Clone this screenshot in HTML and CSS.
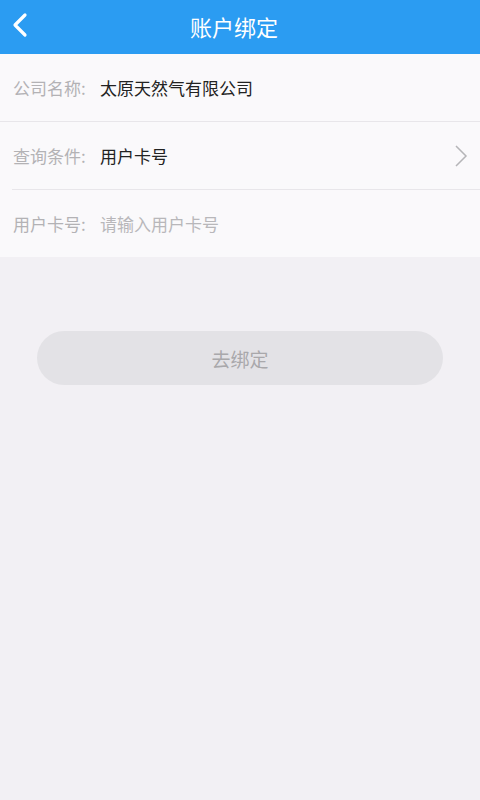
FILE: index.html
```html
<!DOCTYPE html>
<html lang="zh-CN">
  <head>
    <meta charset="UTF-8" />
    <meta name="viewport" content="width=device-width, initial-scale=1.0" />
    <title>账户绑定</title>
    <link rel="stylesheet" href="styles.css">
  </head>
  <body>
    <div class="header">
      <a class="back" href="#">
        <svg width="18" height="26" viewBox="0 0 18 26">
          <path d="M14 3 L4 13 L14 23" fill="none" stroke="#fff" stroke-width="3.2" stroke-linecap="round" stroke-linejoin="round" />
        </svg>
      </a>
      <h1>账户绑定</h1>
    </div>

    <div class="form">
      <div class="row row-full">
        <span class="label">公司名称:</span>
        <span class="value">太原天然气有限公司</span>
      </div>
      <div class="row row-inset">
        <span class="label">查询条件:</span>
        <span class="value">用户卡号</span>
        <svg class="arrow" width="14" height="24" viewBox="0 0 14 24">
          <path d="M2 2 L12 12 L2 22" fill="none" stroke="#b5b5b8" stroke-width="1.5" />
        </svg>
      </div>
      <div class="row">
        <span class="label">用户卡号:</span>
        <input class="input" type="text" placeholder="请输入用户卡号" />
      </div>
    </div>

    <button class="bind-btn">去绑定</button>
  </body>
</html>
```

FILE: styles.css
```css
body {
  margin: 0;
  font-family: "Noto Sans CJK SC", "Noto Sans", sans-serif;
  background-color: #f2f0f4;
  min-height: 800px;
}
.header {
  height: 54px;
  background-color: #2b9cf2;
  display: flex;
  align-items: center;
  justify-content: center;
  padding-right: 12px;
  padding-bottom: 3px;
  box-sizing: border-box;
  position: relative;
}
.header h1 {
  margin: 0;
  color: #fff;
  font-size: 22px;
  font-weight: normal;
}
.back {
  position: absolute;
  left: 11px;
  top: 12px;
  display: flex;
}
.form {
  background-color: #faf9fb;
}
.row {
  height: 67px;
  display: flex;
  align-items: center;
  padding: 0 12px 0 13px;
  font-size: 17px;
}
.row-full {
  border-bottom: 1px solid #e8e6ea;
}
.row-inset {
  margin-left: 12px;
  padding-left: 1px;
  border-bottom: 1px solid #e8e6ea;
}
.label {
  color: #b3b2b5;
  width: 87px;
  flex-shrink: 0;
}
.value {
  color: #222;
  flex: 1;
}
.input {
  flex: 1;
  border: none;
  background: transparent;
  font-family: inherit;
  font-size: 17px;
  padding: 0;
  outline: none;
}
.input::placeholder {
  color: #b8b7ba;
}
.bind-btn {
  display: block;
  width: 406px;
  height: 54px;
  margin: 74px auto 0;
  border: none;
  border-radius: 27px;
  background-color: #e3e2e6;
  color: #a9a8ab;
  font-family: inherit;
  font-size: 19px;
}
```
